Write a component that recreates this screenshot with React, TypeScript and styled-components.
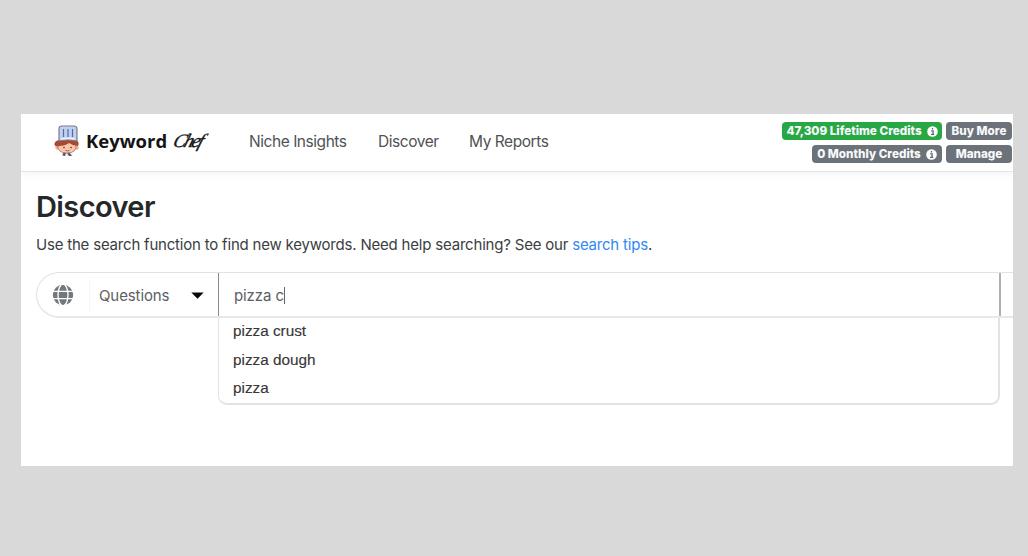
import React from 'react';
import styled, { createGlobalStyle } from 'styled-components';

const GlobalStyle = createGlobalStyle`
  * { box-sizing: border-box; }
  html, body { margin: 0; background: #d9d9d9; }
  body { font-family: Inter, "Liberation Sans", sans-serif; color: #3b3e41; }
`;

const Stage = styled.main`
  width: 1028px;
  height: 556px;
  padding: 114px 15px 90px 21px;
  background: #d9d9d9;
  overflow: hidden;
`;

const Panel = styled.div`
  width: 992px;
  height: 352px;
  background: #fff;
  overflow: hidden;
`;

const Header = styled.header`
  display: flex;
  align-items: flex-start;
  height: 58px;
  padding-left: 33px;
  border-bottom: 1px solid #e6e6e6;
  box-shadow: 0 2px 8px rgba(0, 0, 0, 0.05);
`;

const Brand = styled.a`
  display: flex;
  align-items: center;
  height: 54px;
  width: 195px;
`;

const BrandName = styled.span`
  margin-left: 6px;
  width: 88px;
  font: 700 18.5px/24px "Open Sans", "Noto Sans", sans-serif;
  color: #151515;
`;

const BrandScript = styled.span`
  font: italic 400 19px/24px "Liberation Serif", cursive;
  letter-spacing: -2px;
  color: #151515;
  -webkit-text-stroke: 0.4px #151515;
  transform: skewX(-18deg);
`;

const Nav = styled.nav`
  display: flex;
  gap: 31px;
  height: 56px;
  align-items: center;
`;

const NavLink = styled.a<{ $width: number }>`
  width: ${(p) => p.$width}px;
  font-size: 15.5px;
  line-height: 20px;
  letter-spacing: -0.45px;
  white-space: nowrap;
  color: #505254;
`;

const Credits = styled.div`
  display: grid;
  grid-template-columns: 160px 66px;
  grid-auto-rows: 18px;
  gap: 5px 4px;
  justify-items: end;
  margin: 8px 1px 0 auto;
`;

const Badge = styled.span<{ $green?: boolean; $width: number }>`
  display: flex;
  align-items: center;
  justify-content: center;
  gap: 5px;
  width: ${(p) => p.$width}px;
  height: 18px;
  border-radius: 4px;
  background: ${(p) => (p.$green ? '#28a745' : '#6c7279')};
  color: #f8f9fa;
  font-size: 11.7px;
  font-weight: 800;
  line-height: 18px;
  white-space: nowrap;
`;

const Content = styled.section`
  padding: 17px 0 0 15px;
`;

const Title = styled.h1`
  margin: 0;
  font-size: 29px;
  font-weight: 560;
  line-height: 36px;
  letter-spacing: -0.6px;
  color: #25282b;
`;

const Intro = styled.p`
  margin: 10px 0 0;
  font-size: 15px;
  line-height: 20px;
  letter-spacing: -0.2px;
  white-space: nowrap;
`;

const TipsLink = styled.a`
  color: #3088f5;
`;

const SearchRow = styled.div`
  display: flex;
  height: 46px;
  width: 990px;
  margin-top: 17px;
  border: 1px solid #e2e2e2;
  border-bottom: 2px solid #e8e8e8;
  border-radius: 23px 0 0 23px;
`;

const Region = styled.div`
  display: flex;
  align-items: center;
  width: 52px;
  padding: 0 0 0 15px;
`;

const TypeSelect = styled.div`
  display: flex;
  align-items: center;
  justify-content: space-between;
  width: 129px;
  margin: 4px 0;
  padding: 0 14px 0 9px;
  border-left: 1px solid #f7f7f7;
  border-top: 1px solid #fafafa;
  font-size: 15px;
  letter-spacing: -0.1px;
  color: #5c6064;
`;

const Query = styled.div`
  display: flex;
  align-items: center;
  width: 783px;
  padding: 1px 0 0 15px;
  border-left: 1px solid #8b8b8b;
  border-right: 2px solid #b0b0b0;
  font-size: 15px;
  letter-spacing: -0.1px;
  color: #5c6064;
`;

const Caret = styled.i`
  width: 1px;
  height: 17px;
  background: #666;
`;

const Suggestions = styled.ul`
  width: 782px;
  height: 87px;
  margin: 0 0 0 182px;
  padding: 0 0 0 14px;
  list-style: none;
  border: solid #e2e2e2;
  border-width: 0 2px 2px 1px;
  border-radius: 0 0 9px 9px;
`;

const Suggestion = styled.li`
  height: 28.7px;
  font: 15.3px/26px "Liberation Sans", Arial, sans-serif;
  -webkit-text-stroke: 0.15px #383838;
  color: #383838;
`;

const ChefIcon = () => (
  <svg width="26" height="32" viewBox="0 0 26 32">
    <path d="M9 26h8l2 5H8z" fill="#eeeef5" />
    <path d="M9.5 27l-1 3.5 2.5.5 1-3zm5.500 0 3 4h-3l-2-3z" fill="#54557f" />
    <circle cx="3.600" cy="22.500" r="2.300" fill="#eeb197" />
    <circle cx="22.500" cy="22.500" r="2.300" fill="#eeb197" />
    <path d="M4 20q1-5 9-5t9 5q1 8-9 8t-9-8z" fill="#f7c6ab" stroke="#a86450" strokeWidth=".7" />
    <path d="M5 15q-5 1-4.500 5 1 2 4.500 1 6 0 10-3 4 3 9 3 2-4-2-6z" fill="#a9482e" />
    <circle cx="10" cy="22.500" r=".8" fill="#573330" />
    <circle cx="17" cy="22.500" r=".8" fill="#573330" />
    <path d="M11.500 25.300q2 1.300 4 0" stroke="#c65255" fill="none" />
    <path d="M5 4q0-3 3-3h12q3 0 3 3v12q-9-2-18 0z" fill="#c2d0f0" stroke="#777d90" strokeWidth="1.2" />
    <path d="M9.500 4v8M14 4v8M18.500 4v8" stroke="#526aa6" strokeWidth="1.2" />
    <path d="M7 14q7-1.500 14 0" stroke="#eef2ff" strokeWidth="1.3" fill="none" />
  </svg>
);

const GlobeIcon = () => (
  <svg width="22" height="22" viewBox="0 0 22 22">
    <circle cx="11" cy="11" r="10.2" fill="#74787d" />
    <g fill="none" stroke="#fff" strokeWidth="1.3">
      <ellipse cx="11" cy="11" rx="5" ry="10.8" />
      <path d="M0 7.3h22M0 14.7h22" />
    </g>
  </svg>
);

const InfoIcon = () => (
  <svg width="11" height="11" viewBox="0 0 11 11">
    <circle cx="5.5" cy="5.5" r="5.3" fill="#fff" />
    <path d="M4.2 4.8h1.9v3.5M4 8.4h3.2M5.5 2v1.5" stroke="#61666b" strokeWidth="1.3" fill="none" />
  </svg>
);

const ArrowIcon = () => (
  <svg width="13" height="7" viewBox="0 0 13 7">
    <path d="M.3.4h12.4L6.5 6.8z" fill="#080808" />
  </svg>
);

export default function App() {
  return (
    <Stage>
      <GlobalStyle />
      <Panel>
        <Header>
          <Brand>
            <ChefIcon />
            <BrandName>Keyword</BrandName>
            <BrandScript>Chef</BrandScript>
          </Brand>
          <Nav>
            <NavLink $width={98}>Niche Insights</NavLink>
            <NavLink $width={60}>Discover</NavLink>
            <NavLink $width={80}>My Reports</NavLink>
          </Nav>
          <Credits>
            <Badge $green $width={160}>47,309 Lifetime Credits <InfoIcon /></Badge>
            <Badge $width={66}>Buy More</Badge>
            <Badge $width={130}>0 Monthly Credits <InfoIcon /></Badge>
            <Badge $width={66}>Manage</Badge>
          </Credits>
        </Header>
        <Content>
          <Title>Discover</Title>
          <Intro>
            Use the search function to find new keywords. Need help searching? See our <TipsLink>search tips</TipsLink>.
          </Intro>
          <SearchRow>
            <Region><GlobeIcon /></Region>
            <TypeSelect>Questions <ArrowIcon /></TypeSelect>
            <Query>pizza c<Caret /></Query>
          </SearchRow>
          <Suggestions>
            <Suggestion>pizza crust</Suggestion>
            <Suggestion>pizza dough</Suggestion>
            <Suggestion>pizza</Suggestion>
          </Suggestions>
        </Content>
      </Panel>
    </Stage>
  );
}
